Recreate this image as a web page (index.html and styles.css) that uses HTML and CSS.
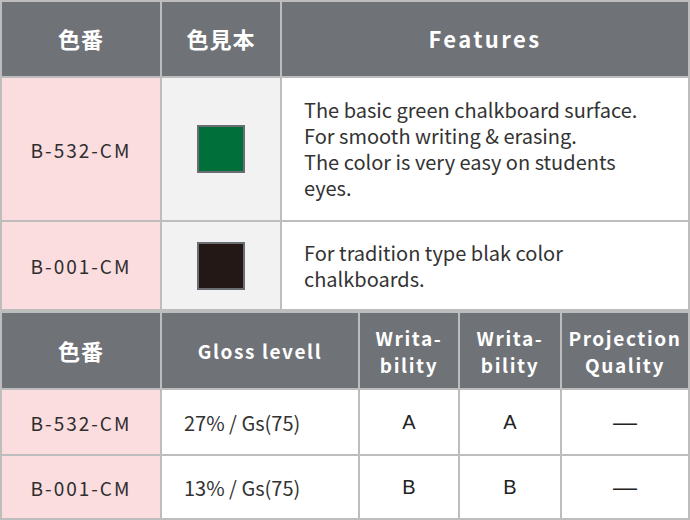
FILE: index.html
```html
<!DOCTYPE html>
<html>
<head>
<meta charset="utf-8">
<link rel="stylesheet" href="styles.css">
</head>
<body>
<div class="tbl tbl1">
  <div class="cell head jp">色番</div>
  <div class="cell head jp">色見本</div>
  <div class="cell head">Features</div>

  <div class="cell code">B-532-CM</div>
  <div class="cell swatch-cell"><span class="swatch green"></span></div>
  <div class="cell feat">The basic green chalkboard surface.<br>For smooth writing &amp; erasing.<br>The color is very easy on students<br>eyes.</div>

  <div class="cell code">B-001-CM</div>
  <div class="cell swatch-cell"><span class="swatch black"></span></div>
  <div class="cell feat">For tradition type blak color<br>chalkboards.</div>
</div>
<div class="tbl tbl2">
  <div class="cell head jp">色番</div>
  <div class="cell head small">Gloss levell</div>
  <div class="cell head small two">Writa-<br>bility</div>
  <div class="cell head small two">Writa-<br>bility</div>
  <div class="cell head small two">Projection<br>Quality</div>

  <div class="cell code">B-532-CM</div>
  <div class="cell gloss">27% / Gs(75)</div>
  <div class="cell grade">A</div>
  <div class="cell grade">A</div>
  <div class="cell grade dash">—</div>

  <div class="cell code">B-001-CM</div>
  <div class="cell gloss">13% / Gs(75)</div>
  <div class="cell grade">B</div>
  <div class="cell grade">B</div>
  <div class="cell grade dash">—</div>
</div>
</body>
</html>
```
FILE: styles.css
```css
html, body {
  margin: 0;
  padding: 0;
  background: #ffffff;
}
body {
  width: 690px;
  font-family: "Noto Sans CJK JP", "Noto Sans", sans-serif;
  color: #333333;
}
.tbl {
  display: grid;
  background: #bdbdbd;
  padding: 2px;
  gap: 2px;
}
.tbl1 {
  grid-template-columns: 158px 118px 1fr;
  grid-template-rows: 74px 142px 87px;
}
.tbl2 {
  grid-template-columns: 158px 196px 98px 100px 1fr;
  grid-template-rows: 75px 64px 62px;
}
.cell {
  display: flex;
  align-items: center;
  justify-content: center;
  background: #ffffff;
}
.head {
  background: #6f7377;
  color: #ffffff;
  font-weight: 700;
  font-size: 22px;
  letter-spacing: 2.4px;
  padding-bottom: 2px;
}
.head.jp {
  letter-spacing: 1px;
}
.head.small {
  font-size: 19px;
  letter-spacing: 1.6px;
  padding-bottom: 0;
}
.head.two {
  text-align: center;
  line-height: 27px;
}
.code {
  background: #fbdde0;
  font-size: 19px;
  letter-spacing: 2px;
  color: #2e2e2e;
}
.swatch-cell {
  background: #f2f2f2;
}
.swatch {
  display: block;
  width: 44px;
  height: 44px;
  border: 2px solid #6a6e72;
}
.swatch.green { background: #006f3a; }
.swatch.black { background: #231815; }
.feat {
  justify-content: flex-start;
  padding-left: 22px;
  font-size: 20px;
  line-height: 26px;
}
.gloss {
  justify-content: flex-start;
  padding-left: 22px;
  font-size: 20px;
}
.grade {
  font-family: "Liberation Sans", Arial, sans-serif;
  font-size: 20px;
  color: #222222;
}
.grade.dash {
  font-size: 24px;
}
```
